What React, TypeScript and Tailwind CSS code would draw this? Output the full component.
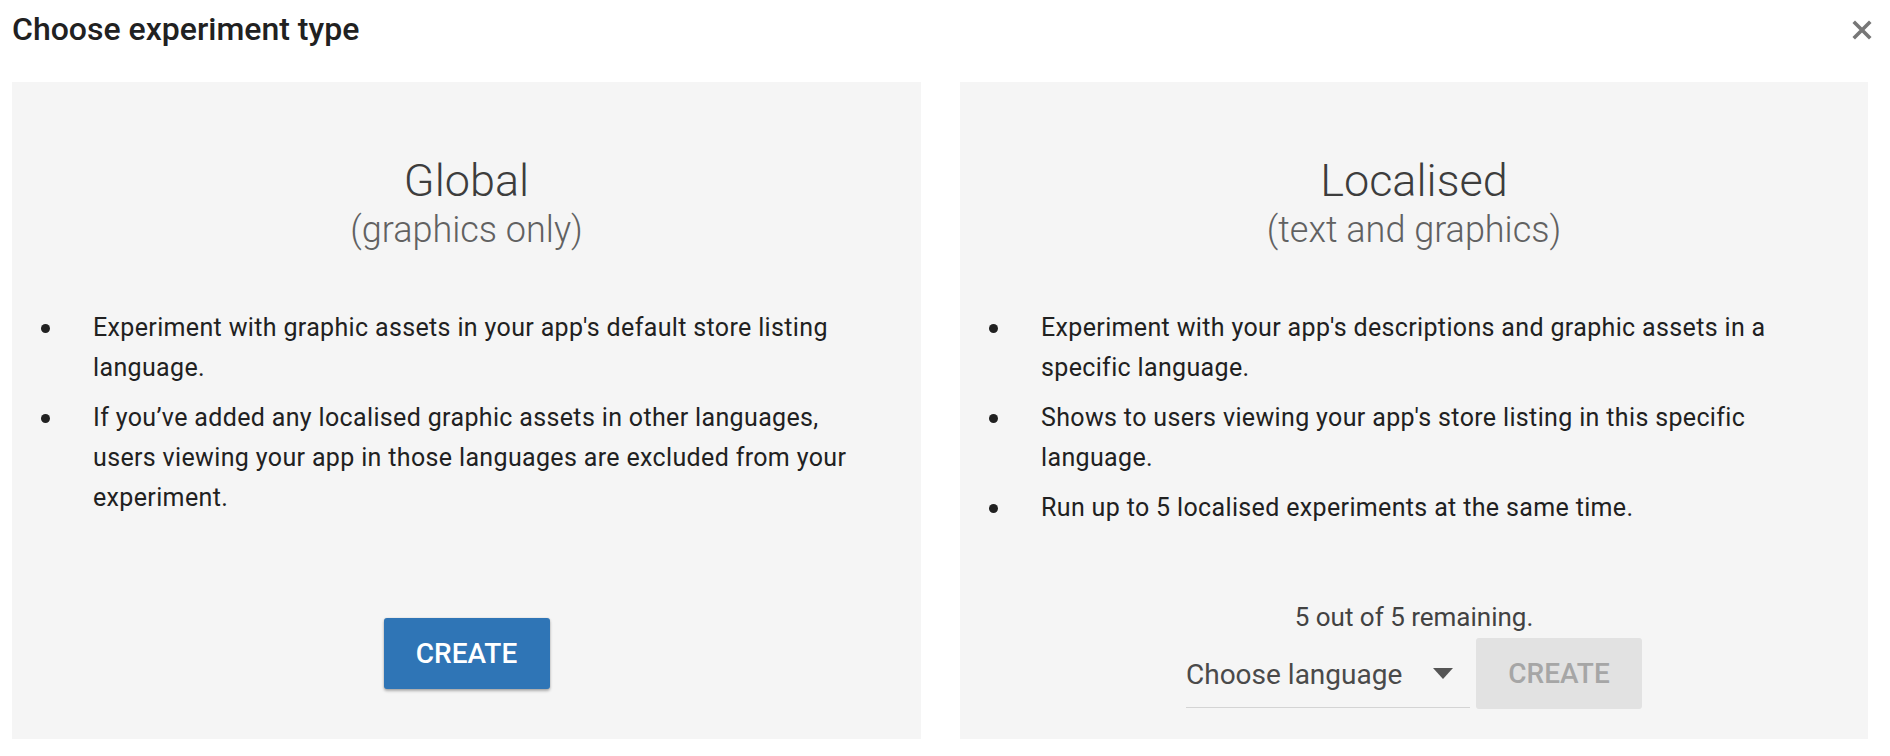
import React from 'react';

interface PanelProps {
  title: string;
  subtitle: string;
  bullets: string[];
  children: React.ReactNode;
  widthClass: string;
  bottomClass: string;
}

function Panel({ title, subtitle, bullets, children, widthClass, bottomClass }: PanelProps) {
  return (
    <div className={`${widthClass} h-[657px] bg-[#f5f5f5] flex flex-col pt-[72px] ${bottomClass}`}>
      <div className="text-center">
        <div className="text-[45px] leading-[54px] font-light text-[#3d3d3d]">{title}</div>
        <div className="text-[36px] leading-[44px] font-light text-[#616161]">{subtitle}</div>
      </div>

      <ul className="mt-[56px] pl-[29px] pr-[43px] flex flex-col gap-[10px]">
        {bullets.map((b) => (
          <li key={b} className="flex text-[25px] tracking-[0.35px] leading-[40px] text-[#212121]">
            <span className="w-[52px] shrink-0">
              <span className="block w-[9px] h-[9px] mt-[16px] rounded-full bg-[#212121]" />
            </span>
            <span>{b}</span>
          </li>
        ))}
      </ul>

      <div className="mt-auto flex flex-col items-center">{children}</div>
    </div>
  );
}

export default function App() {
  return (
    <div className="w-[1890px] h-[756px] bg-white font-['Roboto',sans-serif]">
      {/* header */}
      <div className="flex items-start justify-between pl-[12px] pr-[18px] pt-[9px] h-[82px]">
        <h1 className="text-[32px] leading-[40px] font-medium text-[#212121]">Choose experiment type</h1>
        <svg width="20" height="20" viewBox="0 0 20 20" className="mt-[11px]">
          <path d="M3 3 L17 17 M17 3 L3 17" stroke="#777" strokeWidth="3.6" strokeLinecap="square" />
        </svg>
      </div>

      <div className="flex gap-[39px] pl-[12px]">
        <Panel
          widthClass="w-[909px]"
          bottomClass="pb-[50px]"
          title="Global"
          subtitle="(graphics only)"
          bullets={[
            "Experiment with graphic assets in your app's default store listing language.",
            'If you\u2019ve added any localised graphic assets in other languages, users viewing your app in those languages are excluded from your experiment.',
          ]}
        >
          <button className="w-[166px] h-[71px] rounded-[3px] bg-[#2f75b6] text-white text-[28px] font-medium shadow-[0_2px_3px_rgba(0,0,0,0.3),0_0_2px_rgba(0,0,0,0.12)]">
            CREATE
          </button>
        </Panel>

        <Panel
          widthClass="w-[908px]"
          bottomClass="pb-[30px]"
          title="Localised"
          subtitle="(text and graphics)"
          bullets={[
            "Experiment with your app's descriptions and graphic assets in a specific language.",
            "Shows to users viewing your app's store listing in this specific language.",
            'Run up to 5 localised experiments at the same time.',
          ]}
        >
          <div className="text-[26px] leading-[24px] text-[#424242]">5 out of 5 remaining.</div>
          <div className="mt-[9px] flex items-start gap-[6px]">
            <div className="w-[284px] h-[70px] flex items-center justify-between border-b border-[#d4d4d4] pr-[17px]">
              <span className="pt-[4px] text-[28px] text-[#4a4a4a]">Choose language</span>
              <svg width="20" height="11" viewBox="0 0 20 11" className="mt-[2px]">
                <path d="M0 0 H20 L10 11 Z" fill="#555" />
              </svg>
            </div>
            <button className="w-[166px] h-[71px] rounded-[3px] bg-[#e2e2e2] text-[#a6a6a6] text-[28px] font-medium">
              CREATE
            </button>
          </div>
        </Panel>
      </div>
    </div>
  );
}
